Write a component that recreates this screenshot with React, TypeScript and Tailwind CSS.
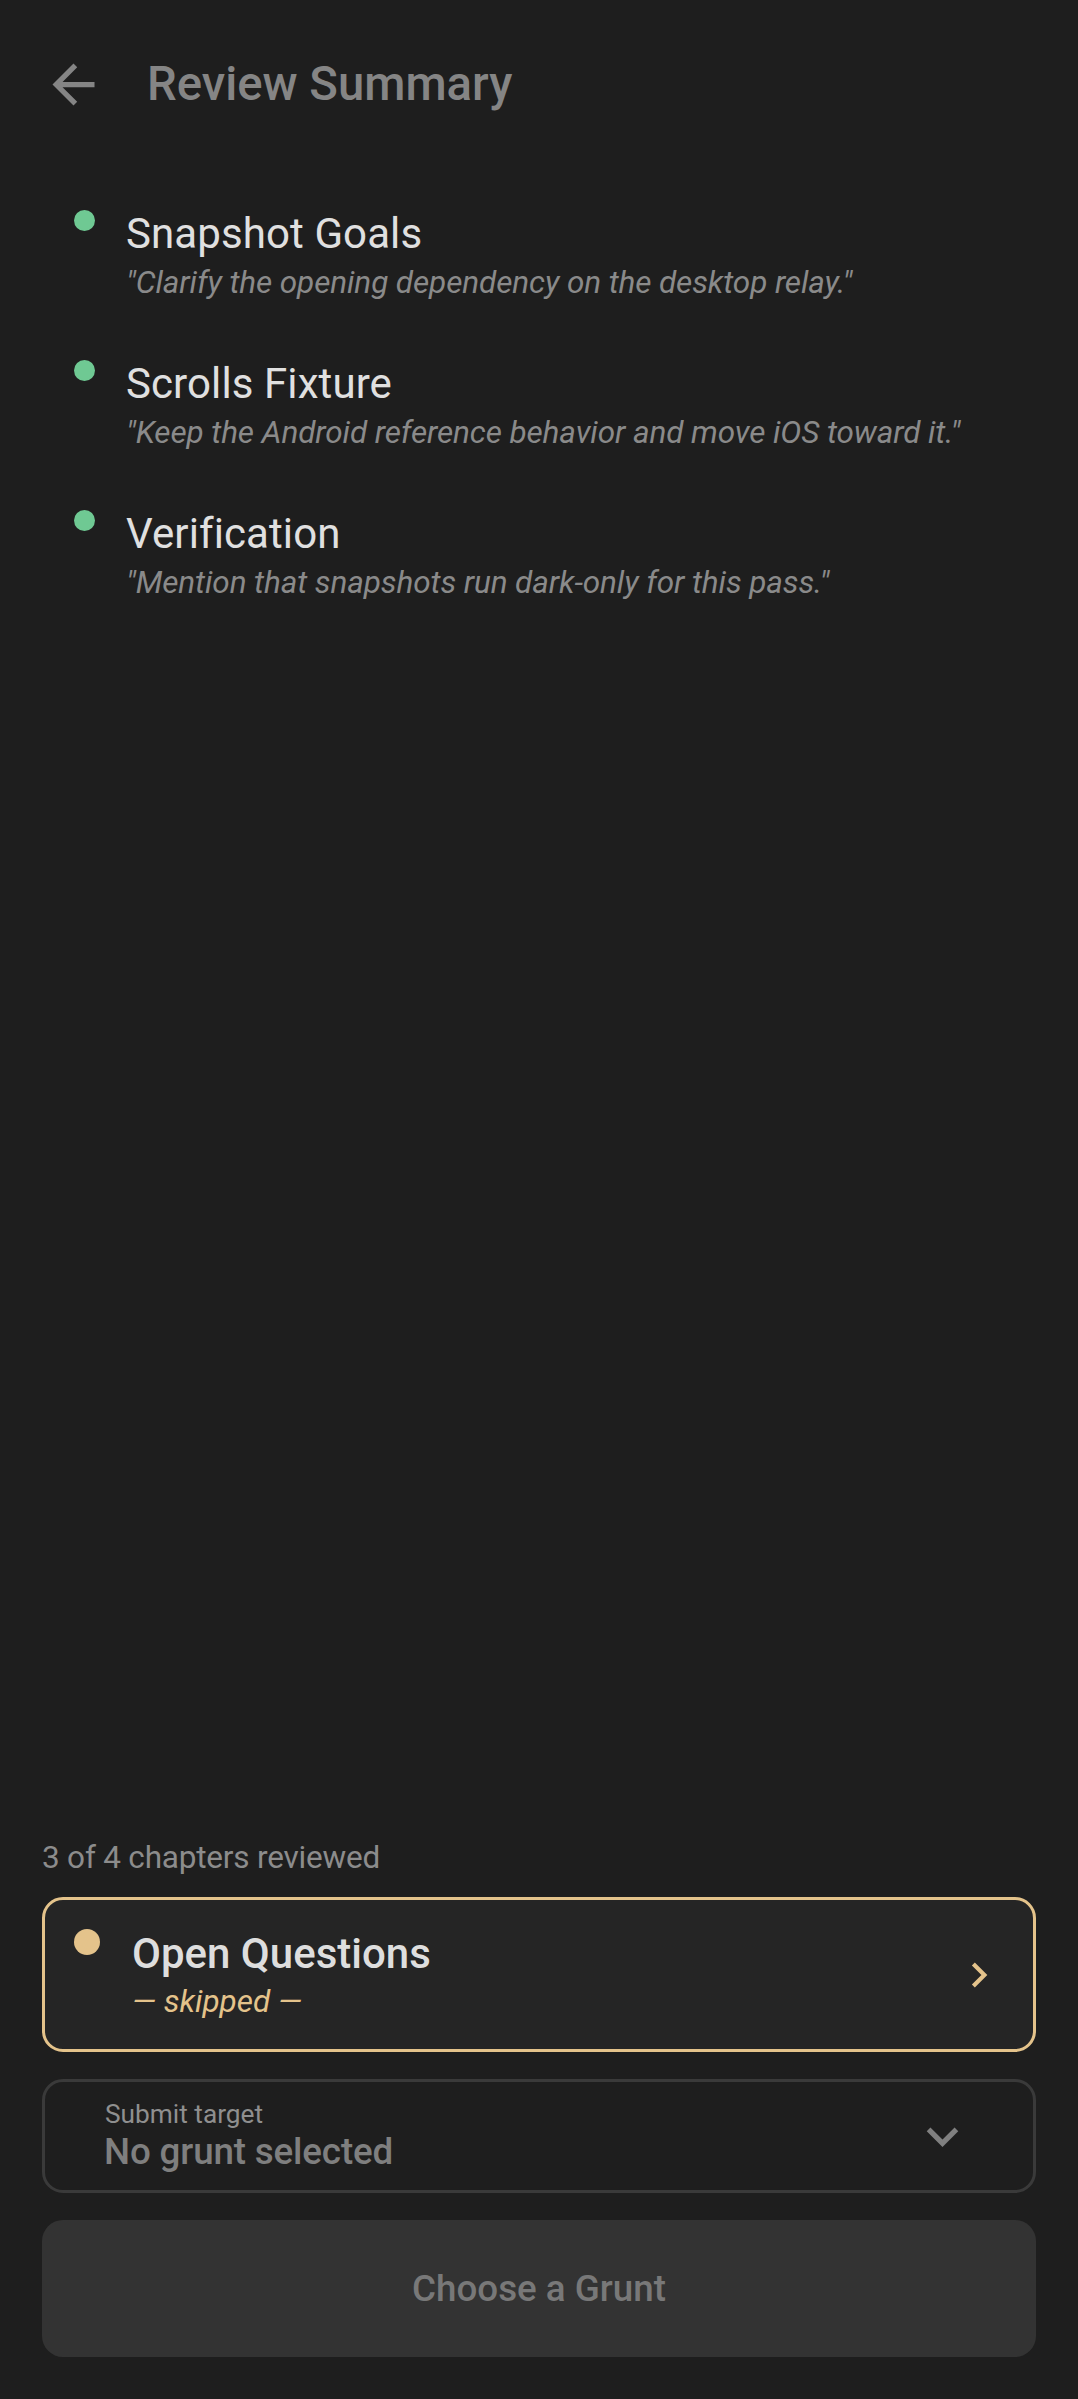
export default function App() {
  const items = [
    { title: "Snapshot Goals", quote: '"Clarify the opening dependency on the desktop relay."' },
    { title: "Scrolls Fixture", quote: '"Keep the Android reference behavior and move iOS toward it."' },
    { title: "Verification", quote: '"Mention that snapshots run dark-only for this pass."' },
  ];
  return (
    <div className="h-screen w-full bg-[#1e1e1e] flex flex-col font-['Roboto','Noto_Sans',sans-serif] overflow-hidden">
      {/* Header */}
      <div className="h-[166px] mt-[1px] flex items-center pl-[42px] shrink-0">
        <svg className="w-[63px] h-[63px] shrink-0" viewBox="0 0 24 24">
          <path fill="#858585" d="M20 11H7.83l5.59-5.59L12 4l-8 8 8 8 1.41-1.41L7.83 13H20v-2z" />
        </svg>
        <h1 className="ml-[42px] text-[47.25px] leading-[55px] font-medium text-[#858585]">Review Summary</h1>
      </div>

      {/* Chapter list */}
      <div className="pt-[42px] pl-[74px] pr-[42px] flex flex-col gap-[58px]">
        {items.map((it) => (
          <div key={it.title} className="flex items-start">
            <div className="w-[21px] h-[21px] rounded-full bg-[#6fc993] mt-[1px] shrink-0" />
            <div className="ml-[31px] flex flex-col">
              <div className="text-[42px] leading-[49px] text-[#e0e0e0] tracking-[0.1px]">{it.title}</div>
              <div className="mt-[6px] text-[31.5px] leading-[37px] italic text-[#8a8a8a] tracking-[-0.1px]">{it.quote}</div>
            </div>
          </div>
        ))}
      </div>

      <div className="flex-1" />

      {/* Bottom section */}
      <div className="px-[42px] pb-[42px] flex flex-col shrink-0">
        <div className="text-[31.5px] leading-[37px] text-[#8c8c8c] tracking-[-0.2px]">3 of 4 chapters reviewed</div>

        <div className="mt-[21px] border-[3px] border-[#e4c38b] bg-[#252525] rounded-[21px] p-[29px] flex items-center">
          <div className="flex items-start flex-1">
            <div className="w-[26px] h-[26px] rounded-full bg-[#e4c38b] shrink-0" />
            <div className="ml-[32px] flex flex-col">
              <div className="text-[42px] leading-[49px] font-medium text-[#dedede]">Open Questions</div>
              <div className="mt-[5px] text-[31.5px] leading-[37px] italic text-[#e4c38b]">— skipped —</div>
            </div>
          </div>
          <svg className="w-[50px] h-[50px] shrink-0" viewBox="0 0 24 24">
            <path fill="#e4c38b" d="M10 6 8.59 7.41 13.17 12l-4.58 4.59L10 18l6-6z" />
          </svg>
        </div>

        <div className="mt-[27px] h-[114px] border-[3px] border-[#3a3a3a] rounded-[21px] px-[59px] flex items-center">
          <div className="flex flex-col flex-1">
            <div className="ml-[1px] text-[26.25px] leading-[31px] text-[#8f8f8f]">Submit target</div>
            <div className="text-[36.75px] leading-[43px] font-medium text-[#7f7f7f] tracking-[-0.15px]">No grunt selected</div>
          </div>
          <svg className="w-[63px] h-[63px] shrink-0" viewBox="0 0 24 24">
            <path fill="#808080" d="M16.59 8.59 12 13.17 7.41 8.59 6 10l6 6 6-6z" />
          </svg>
        </div>

        <div className="mt-[27px] h-[137px] rounded-[21px] bg-[#333333] flex items-center justify-center">
          <span className="text-[36.75px] leading-[43px] font-medium text-[#787878]">Choose a Grunt</span>
        </div>
      </div>
    </div>
  );
}
